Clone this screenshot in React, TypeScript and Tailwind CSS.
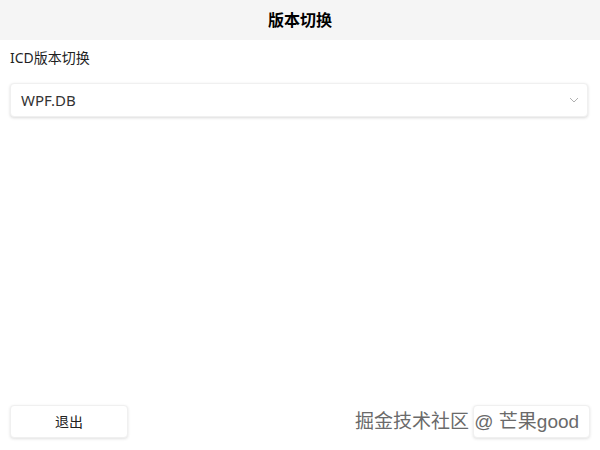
import React, { useState } from "react";

const font = { fontFamily: '"Noto Sans", "Noto Sans CJK SC", sans-serif' };

function Chevron() {
  return (
    <svg width="10" height="6" viewBox="0 0 10 6" fill="none">
      <path d="M1 1l4 4 4-4" stroke="#b0b0b0" strokeWidth="1" />
    </svg>
  );
}

export default function App() {
  const [version] = useState("WPF.DB");

  return (
    <div
      className="relative w-[600px] h-[450px] bg-white flex flex-col text-[#1f1f1f]"
      style={font}
    >
      <div className="h-10 bg-[#f5f5f5] flex items-center justify-center">
        <span className="text-[16px] font-bold text-black">版本切换</span>
      </div>

      <div className="px-[10px] flex-1 flex flex-col">
        <div className="mt-[8px] text-[14px] leading-[20px]">ICD版本切换</div>
        <button className="mt-[15px] h-[34px] w-[578px] rounded-[4px] bg-white shadow-[0_1px_3px_rgba(0,0,0,0.15)] border border-[#f0f0f0] flex items-center justify-between pl-[10px] pr-[8px]">
          <span className="text-[15px] text-[#333]">{version}</span>
          <Chevron />
        </button>

        <div className="mt-auto mb-[12px] flex justify-between">
          <button className="w-[118px] h-[33px] rounded-[4px] bg-white border border-[#f0f0f0] shadow-[0_1px_3px_rgba(0,0,0,0.12)] text-[14px] text-[#222]">
            退出
          </button>
          <button className="w-[117px] h-[33px] rounded-[4px] bg-white border border-[#f0f0f0] shadow-[0_1px_3px_rgba(0,0,0,0.12)] text-[14px]"></button>
        </div>
      </div>

      <div
        className="absolute left-[355px] top-[409px] text-[19px] leading-[26px] text-[#6a6a6a] whitespace-nowrap"
        style={{
          fontFamily: '"Liberation Sans", "Noto Sans CJK SC", sans-serif',
          textShadow: "0 0 1px #fff, 1px 1px 0 #fff, -1px -1px 0 #fff",
        }}
      >
        掘金技术社区 @ 芒果good
      </div>
    </div>
  );
}
